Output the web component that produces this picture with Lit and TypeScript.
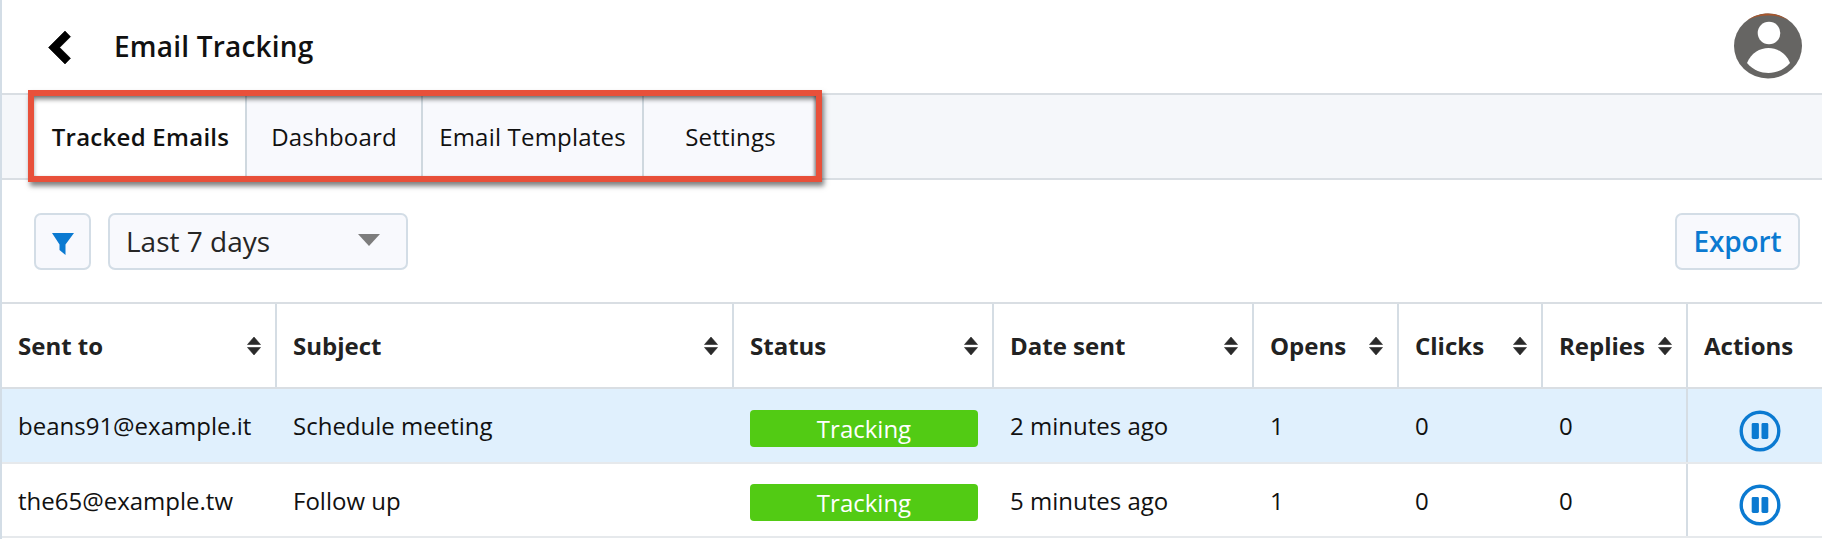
import { LitElement, html, css } from "lit";
import { customElement } from "lit/decorators.js";

const sortIcon = html`<svg class="sort" viewBox="0 0 14 20" width="14" height="20"><path d="M7 1 13.500 8.500H.5zM7 19 .5 11.500h13z" stroke="#2a2a2a" stroke-width=".6" stroke-linejoin="round"/></svg>`;
const pauseIcon = html`<svg class="pause" viewBox="0 0 42 42" width="42" height="42"><circle cx="21" cy="21" r="18.800" fill="none" stroke="#0b7ad1" stroke-width="3.400"/><rect x="12.700" y="13" width="7.200" height="16" rx="1.400" fill="#0b7ad1"/><rect x="22.500" y="13" width="6.800" height="16" rx="1.400" fill="#0b7ad1"/></svg>`;

const columns = [
  { label: "Sent to", sort: true },
  { label: "Subject", sort: true },
  { label: "Status", sort: true },
  { label: "Date sent", sort: true },
  { label: "Opens", sort: true },
  { label: "Clicks", sort: true },
  { label: "Replies", sort: true },
  { label: "Actions", sort: false },
];
const rows = [
  { to: "beans91@example.it", subject: "Schedule meeting", date: "2 minutes ago", hl: true },
  { to: "the65@example.tw", subject: "Follow up", date: "5 minutes ago", hl: false },
];
const tabs = ["Tracked Emails", "Dashboard", "Email Templates", "Settings"];

@customElement("app-root")
export class AppRoot extends LitElement {
  static styles = css`
    :host {
      display: block;
      position: relative;
      width: 1822px;
      height: 539px;
      overflow: hidden;
      background: #fff;
      font-family: "Open Sans", sans-serif;
      color: #1a1a1a;
      box-sizing: border-box;
      border-left: 2px solid #d3dde6;
    }
    * { box-sizing: border-box; }
    .header {
      height: 95px;
      display: flex;
      align-items: center;
      padding: 0 20px 0 46px;
      border-bottom: 2px solid #d9dee3;
    }
    .back { display: block; margin-right: 42px; }
    .title { font-size: 28px; font-weight: 600; color: #111; flex: 1; letter-spacing: .2px; margin-top: -2px; }
    .avatar { display: block; margin-top: -1px; }
    .tabbar {
      height: 85px;
      background: #f5f7fa;
      border-bottom: 2px solid #d9dee3;
      display: flex;
      padding-left: 32px;
    }
    .tab {
      display: flex;
      align-items: center;
      justify-content: center;
      background: #f8f9fd;
      border-right: 2px solid #cfd8df;
      font-size: 24px;
      letter-spacing: .2px;
      color: #111;
      height: 83px;
    }
    .tab.active { background: #fff; font-weight: 600; letter-spacing: .27px; padding-left: 2px; }
    .tab:nth-child(1) { width: 213px; }
    .tab:nth-child(2) { width: 176px; }
    .tab:nth-child(3) { width: 221px; }
    .tab:nth-child(4) { width: 173px; border-right: 0; }
    .toolbar {
      height: 122px;
      display: flex;
      align-items: center;
      padding: 0 22px 0 32px;
      gap: 17px;
    }
    .btn {
      height: 57px;
      border: 2px solid #d3dde6;
      border-radius: 7px;
      background: #f8f9fd;
      display: flex;
      align-items: center;
    }
    .filter { width: 57px; justify-content: center; }
    .filter svg { display: block; margin-top: 5px; }
    .select {
      width: 300px;
      padding: 0 26px 0 16px;
      justify-content: space-between;
      font-size: 28px;
      color: #262626;
    }
    .caret { display: block; margin-top: -3px; }
    .export {
      margin-left: auto;
      width: 125px;
      justify-content: center;
      font-size: 28px;
      font-weight: 600;
      letter-spacing: -.1px;
      color: #0b7ad1;
    }
    .table { display: block; }
    .row {
      display: grid;
      grid-template-columns: 275px 457px 260px 260px 145px 144px 145px 1fr;
    }
    .head { height: 87px; border-top: 2px solid #d9dee3; border-bottom: 2px solid #d9dee3; }
    .th {
      display: flex;
      align-items: center;
      justify-content: space-between;
      padding: 0 14px 0 16px;
      font-size: 24px;
      font-weight: 700;
      color: #222;
      border-right: 2px solid #d5dde4;
      white-space: nowrap;
    }
    .th:last-child { border-right: 0; }
    .sort { display: block; fill: #2a2a2a; flex: none; }
    .data { height: 75px; border-bottom: 2px solid #e6e9ec; }
    .data.second { height: 74px; }
    .data.hl { background: #e0f0fd; }
    .td {
      display: flex;
      align-items: center;
      padding: 0 16px;
      font-size: 24px;
      color: #111;
      white-space: nowrap;
    }
    .td:last-child { border-left: 2px solid #d5dde4; margin-left: -2px; justify-content: center; padding: 0 0 0 10px; }
    .badge {
      width: 228px;
      height: 37px;
      background: #52cb14;
      color: #fff;
      border-radius: 4px;
      display: flex;
      align-items: center;
      justify-content: center;
      font-size: 24px;
      margin-top: 6px;
    }
    .second .badge { margin-top: 5px; }
    .pause { display: block; margin-top: 10px; }
    .callout {
      position: absolute;
      left: 26px;
      top: 90px;
      width: 794px;
      height: 92px;
      border: 6px solid #e8503a;
      box-shadow: 2px 4px 5px rgba(0,0,0,.5), inset 0 4px 5px -1px rgba(0,0,0,.55), inset -3px 0 3px -1px rgba(0,0,0,.28);
      pointer-events: none;
    }
  `;

  render() {
    return html`
      <div class="header">
        <svg class="back" width="24" height="34" viewBox="0 0 24 34"><path d="M0.500 17.500 17 1 22.500 6.700 11.700 17.500 22.500 28.300 17 34z" fill="#000" stroke="#000" stroke-width=".6" stroke-linejoin="round"/></svg>
        <div class="title">Email Tracking</div>
        <svg class="avatar" width="68" height="66" viewBox="0 0 68 66">
          <ellipse cx="34" cy="33" rx="34" ry="32.500" fill="#666563"/>
          <path d="M13 7.500C20 2.500 27 .5 34 .5s14 2 21 7C48 3.500 41 2.500 34 2.500S20 3.500 13 7.500z" fill="#a8562c"/>
          <circle cx="35" cy="20" r="11.300" fill="#fff"/>
          <path d="M13 50C17 40 26 35 34.500 35 43 35 52 40 56 50 50 57 42 60 34.500 60 27 60 19 57 13 50z" fill="#fff"/>
        </svg>
      </div>
      <div class="tabbar">
        ${tabs.map((t, i) => html`<div class="tab ${i === 0 ? "active" : ""}">${t}</div>`)}
      </div>
      <div class="toolbar">
        <div class="btn filter">
          <svg width="22" height="22" viewBox="0 0 22 22"><path d="M0 0H22L13.500 11.500V22L7.500 17V11.500Z" fill="#0b7ad1"/></svg>
        </div>
        <div class="btn select">
          <span>Last 7 days</span>
          <svg class="caret" width="22" height="12" viewBox="0 0 22 12"><path d="M0 0h22L11 12z" fill="#7d7d7d"/></svg>
        </div>
        <div class="btn export">Export</div>
      </div>
      <div class="table">
        <div class="row head">
          ${columns.map((c) => html`<div class="th"><span>${c.label}</span>${c.sort ? sortIcon : ""}</div>`)}
        </div>
        ${rows.map((r) => html`
          <div class="row data ${r.hl ? "hl" : "second"}">
            <div class="td">${r.to}</div>
            <div class="td">${r.subject}</div>
            <div class="td"><div class="badge">Tracking</div></div>
            <div class="td">${r.date}</div>
            <div class="td">1</div>
            <div class="td">0</div>
            <div class="td">0</div>
            <div class="td">${pauseIcon}</div>
          </div>`)}
      </div>
      <div class="callout"></div>
    `;
  }
}
